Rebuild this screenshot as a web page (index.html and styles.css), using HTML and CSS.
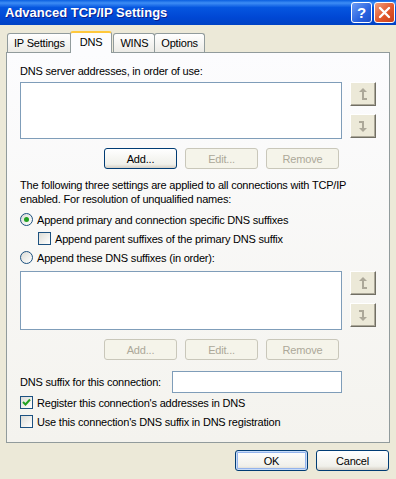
FILE: index.html
```html
<!DOCTYPE html>
<html lang="en">
<head>
  <meta charset="UTF-8" />
  <title>Advanced TCP/IP Settings</title>
  <link rel="stylesheet" href="styles.css">
</head>
<body>

<div class="titlebar">
  <span class="title">Advanced TCP/IP Settings</span>
  <div class="caption-btns">
    <div class="cap help">?</div>
    <div class="cap close">
      <svg width="13" height="13" viewBox="0 0 13 13"><path d="M2 2 L11 11 M11 2 L2 11" stroke="#fff" stroke-width="2.4" stroke-linecap="round"/></svg>
    </div>
  </div>
</div>

<div class="dialog">
  <div class="tabs">
    <div class="tab">IP Settings</div>
    <div class="tab selected">DNS</div>
    <div class="tab">WINS</div>
    <div class="tab">Options</div>
  </div>

  <div class="panel">
    <div class="label">DNS server addresses, in order of use:</div>
    <div class="list-row">
      <div class="listbox"></div>
      <div class="arrows">
        <div class="arrow-btn">
          <svg width="10" height="13" viewBox="0 0 10 13"><path d="M5 0 L9 4 L6 4 L6 10 L9 10 L9 12 L4 12 L4 4 L1 4 Z" fill="#aca899"/></svg>
        </div>
        <div class="arrow-btn">
          <svg width="10" height="13" viewBox="0 0 10 13"><path d="M5 12 L9 8 L6 8 L6 1 L1 1 L1 3 L4 3 L4 8 L1 8 Z" fill="#aca899"/></svg>
        </div>
      </div>
    </div>
    <div class="btn-row">
      <button class="btn">Add...</button>
      <button class="btn" disabled>Edit...</button>
      <button class="btn" disabled>Remove</button>
    </div>

    <p class="info">The following three settings are applied to all connections with TCP/IP enabled. For resolution of unqualified names:</p>

    <div class="option first">
      <span class="radio on"></span>
      <span>Append primary and connection specific DNS suffixes</span>
    </div>
    <div class="option indent">
      <span class="check"></span>
      <span>Append parent suffixes of the primary DNS suffix</span>
    </div>
    <div class="option">
      <span class="radio"></span>
      <span>Append these DNS suffixes (in order):</span>
    </div>

    <div class="list-row second">
      <div class="listbox tall"></div>
      <div class="arrows">
        <div class="arrow-btn">
          <svg width="10" height="13" viewBox="0 0 10 13"><path d="M5 0 L9 4 L6 4 L6 10 L9 10 L9 12 L4 12 L4 4 L1 4 Z" fill="#aca899"/></svg>
        </div>
        <div class="arrow-btn">
          <svg width="10" height="13" viewBox="0 0 10 13"><path d="M5 12 L9 8 L6 8 L6 1 L1 1 L1 3 L4 3 L4 8 L1 8 Z" fill="#aca899"/></svg>
        </div>
      </div>
    </div>
    <div class="btn-row">
      <button class="btn" disabled>Add...</button>
      <button class="btn" disabled>Edit...</button>
      <button class="btn" disabled>Remove</button>
    </div>

    <div class="suffix-row">
      <span>DNS suffix for this connection:</span>
      <input type="text" class="textbox" />
    </div>

    <div class="option reg">
      <span class="check">
        <svg width="11" height="11" viewBox="0 0 11 11"><path d="M2 5 L4.5 7.5 L9 2.5" stroke="#21a121" stroke-width="2" fill="none"/></svg>
      </span>
      <span>Register this connection's addresses in DNS</span>
    </div>
    <div class="option">
      <span class="check"></span>
      <span>Use this connection's DNS suffix in DNS registration</span>
    </div>
  </div>

  <div class="footer">
    <button class="btn default">OK</button>
    <button class="btn">Cancel</button>
  </div>
</div>

</body>
</html>
```

FILE: styles.css
```css
body {
  margin: 0;
  padding: 0;
  background-color: #ece9d8;
  font-family: 'Liberation Sans', Arial, sans-serif;
  font-size: 11px;
  letter-spacing: -0.2px;
  color: #000;
}
.titlebar {
  height: 25px;
  display: flex;
  align-items: center;
  justify-content: space-between;
  background: linear-gradient(#0a5fe0 0%, #3d8df5 12%, #0556e0 30%, #0047d4 70%, #0042c4 100%);
}
.title {
  padding-left: 5px;
  color: #fff;
  font-weight: bold;
  font-size: 13px;
  letter-spacing: 0;
  text-shadow: 1px 1px #0a1e8c;
}
.caption-btns {
  display: flex;
  gap: 2px;
  padding-right: 1px;
}
.cap {
  width: 19px;
  height: 19px;
  border: 1px solid #fff;
  border-radius: 3px;
  display: flex;
  align-items: center;
  justify-content: center;
  color: #fff;
  font-weight: bold;
  font-size: 15px;
}
.help {
  background: linear-gradient(135deg, #6d9cf5, #2a63e0 60%, #1c4ec8);
}
.close {
  background: linear-gradient(135deg, #f0a080, #e2572b 55%, #c8401c);
}
.dialog {
  padding: 6px 6px 0 6px;
}
.tabs {
  display: flex;
  height: 21px;
  align-items: flex-end;
  padding-left: 1px;
}
.tab {
  height: 18px;
  line-height: 18px;
  padding: 0 6px;
  border: 1px solid #919b9c;
  border-bottom: none;
  border-radius: 3px 3px 0 0;
  background: linear-gradient(#fff, #ecebe6);
  margin-right: -1px;
}
.tab.selected {
  height: 20px;
  line-height: 19px;
  padding: 0 9px;
  margin: 0 1px 0 -1px;
  background: #fcfcfe;
  border-top: 2px solid #ffc83c;
  position: relative;
  top: 1px;
  z-index: 1;
}
.panel {
  border: 1px solid #919b9c;
  height: 391px;
  box-sizing: border-box;
  padding: 11px 0 0 13px;
  background: linear-gradient(#fcfcfe, #f4f3ee);
}
.label {
  line-height: 14px;
}
.list-row {
  display: flex;
  gap: 8px;
  margin-top: 4px;
}
.listbox {
  width: 322px;
  height: 57px;
  box-sizing: border-box;
  border: 1px solid #7f9db9;
  background: #fff;
}
.listbox.tall {
  height: 59px;
}
.arrows {
  display: flex;
  flex-direction: column;
  gap: 8px;
}
.arrow-btn {
  width: 26px;
  height: 24px;
  box-sizing: border-box;
  background: #ece9d8;
  border: 1px solid;
  border-color: #fff #716f64 #716f64 #fff;
  box-shadow: inset -1px -1px #aca899;
  display: flex;
  align-items: center;
  justify-content: center;
}
.btn-row {
  display: flex;
  justify-content: flex-end;
  gap: 8px;
  width: 322px;
  padding-right: 3px;
  box-sizing: border-box;
  margin-top: 9px;
}
.btn {
  width: 73px;
  height: 21px;
  font-family: inherit;
  font-size: 11px;
  letter-spacing: -0.2px;
  color: #000;
  border: 1px solid #003c74;
  border-radius: 3px;
  background: linear-gradient(#fff, #f0f0ea 80%, #d6d0c5);
  padding: 0;
}
.btn:disabled {
  color: #aca899;
  border-color: #c9c7ba;
  background: #f5f4ea;
}
.btn.default {
  box-shadow: inset 0 0 0 1px #c8dcf8, inset 0 0 0 2px #94b4ec;
}
.info {
  margin: 9px 0 0 0;
  line-height: 14px;
  width: 362px;
}
.option {
  display: flex;
  align-items: center;
  gap: 4px;
  height: 19px;
}
.option.first {
  margin-top: 4px;
}
.option.indent {
  padding-left: 18px;
}
.radio {
  width: 13px;
  height: 13px;
  box-sizing: border-box;
  border: 1px solid #1c5180;
  border-radius: 50%;
  background: linear-gradient(135deg, #dcdcd6, #fff);
  display: flex;
  align-items: center;
  justify-content: center;
}
.radio.on::after {
  content: "";
  width: 5px;
  height: 5px;
  border-radius: 50%;
  background: #21a121;
}
.check {
  width: 13px;
  height: 13px;
  box-sizing: border-box;
  border: 1px solid #1c5180;
  background: linear-gradient(135deg, #dcdcd6, #fff);
  display: flex;
  align-items: center;
  justify-content: center;
}
.suffix-row {
  display: flex;
  align-items: center;
  margin-top: 11px;
}
.suffix-row span {
  width: 152px;
}
.textbox {
  width: 170px;
  height: 22px;
  box-sizing: border-box;
  border: 1px solid #7f9db9;
  margin: 0;
}
.footer {
  display: flex;
  justify-content: flex-end;
  gap: 8px;
  padding: 7px 1px 0 0;
}
```
